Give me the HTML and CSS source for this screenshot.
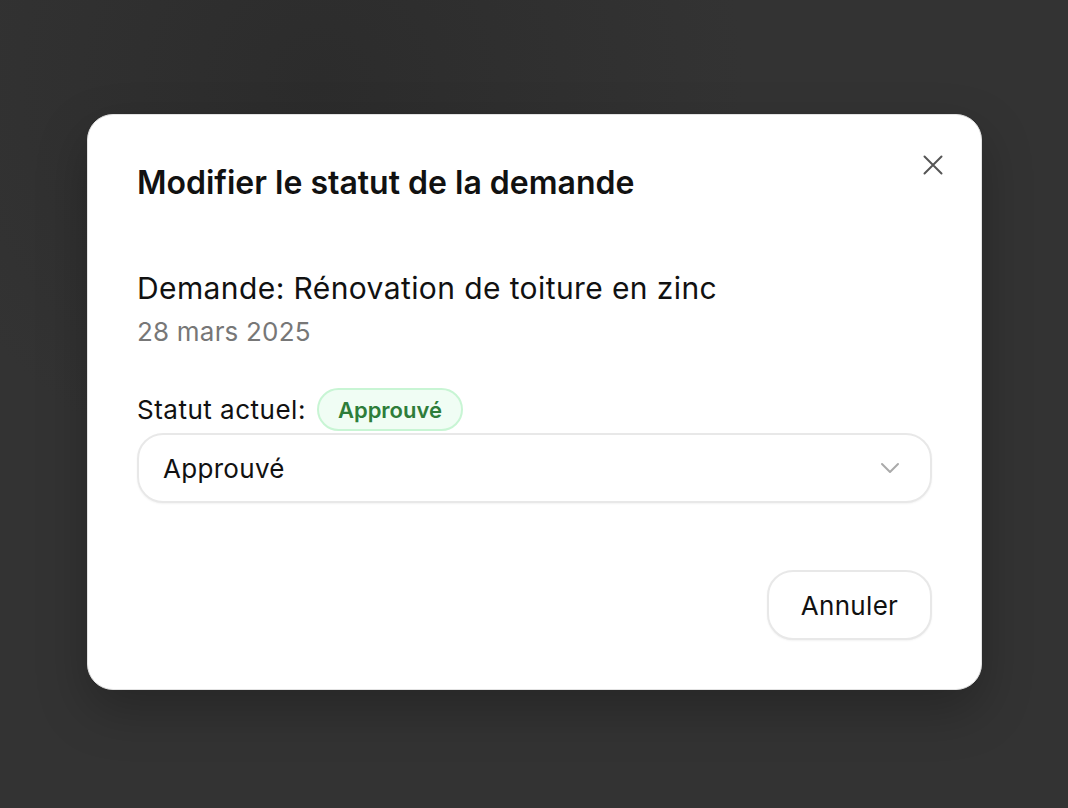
FILE: index.html
```html
<!DOCTYPE html>
<html lang="fr">
<head>
<meta charset="utf-8">
<title>Modifier le statut</title>
<link rel="stylesheet" href="styles.css">
</head>
<body>
<div class="backdrop">
  <div class="modal">
    <div class="modal-header">
      <h2 class="title">Modifier le statut de la demande</h2>
      <button class="close" aria-label="Fermer">
        <svg width="20" height="20" viewBox="0 0 20 20"><path d="M1.5 1.5 L18.5 18.5 M18.5 1.5 L1.5 18.5" stroke="#555" stroke-width="2" stroke-linecap="round" fill="none"/></svg>
      </button>
    </div>
    <div class="request">
      <div class="request-name">Demande: Rénovation de toiture en zinc</div>
      <div class="request-date">28 mars 2025</div>
    </div>
    <div class="status-row">
      <span class="status-label">Statut actuel:</span>
      <span class="badge">Approuvé</span>
    </div>
    <div class="select">
      <span>Approuvé</span>
      <svg width="20" height="12" viewBox="0 0 20 12"><path d="M2 2 L10 10 L18 2" stroke="#aaa" stroke-width="2" fill="none" stroke-linecap="round" stroke-linejoin="round"/></svg>
    </div>
    <div class="actions">
      <button class="btn">Annuler</button>
    </div>
  </div>
</div>
</body>
</html>
```

FILE: styles.css
```css
* { box-sizing: border-box; }
html, body { margin: 0; height: 100%; }
body {
  font-family: Inter, "Noto Sans", sans-serif;
  background: #333333;
}
.backdrop {
  width: 1068px;
  height: 808px;
  background: radial-gradient(ellipse at 30% 10%, #2c2c2c 0%, #333 40%), #333;
  padding-top: 114px;
  padding-left: 87px;
}
.modal {
  width: 895px;
  height: 576px;
  background: #fff;
  border: 1px solid #e2e2e2;
  border-radius: 26px;
  padding: 44px 49px 49px 49px;
  display: flex;
  flex-direction: column;
  box-shadow: 0 20px 50px rgba(0,0,0,0.25);
}
.modal-header {
  display: flex;
  justify-content: space-between;
  align-items: flex-start;
}
.title {
  margin: 0;
  margin-top: 4px;
  font-size: 32px;
  font-weight: 600;
  letter-spacing: 0;
  color: #111;
  line-height: 40px;
}
.close {
  border: none;
  background: none;
  padding: 0;
  margin-top: -4px;
  margin-right: -11px;
  width: 20px;
  height: 20px;
  cursor: pointer;
}
.request { margin-top: 67px; }
.request-name {
  font-size: 30px;
  line-height: 36px;
  letter-spacing: 0.4px;
  color: #111;
}
.request-date {
  font-size: 26px;
  line-height: 32px;
  letter-spacing: 0.2px;
  color: #777;
  margin-top: 10px;
}
.status-row {
  margin-top: 40px;
  display: flex;
  align-items: center;
  gap: 11px;
}
.status-label {
  font-size: 26px;
  letter-spacing: 0.5px;
  color: #111;
}
.badge {
  height: 43px;
  padding: 0 19px;
  display: inline-flex;
  align-items: center;
  border-radius: 22px;
  background: #f0fdf4;
  border: 2px solid #c8f5d4;
  color: #2e7d3a;
  font-size: 22px;
  font-weight: 600;
}
.select {
  margin-top: 2px;
  height: 70px;
  border: 2px solid #e8e8e8;
  border-radius: 26px;
  display: flex;
  align-items: center;
  justify-content: space-between;
  padding: 0 30px 0 24px;
  font-size: 26px;
  letter-spacing: 0.3px;
  color: #111;
  box-shadow: 0 1px 2px rgba(0,0,0,0.05);
}
.actions {
  margin-top: auto;
  display: flex;
  justify-content: flex-end;
}
.btn {
  height: 70px;
  width: 165px;
  border: 2px solid #e8e8e8;
  border-radius: 26px;
  background: #fff;
  font-family: inherit;
  font-size: 26px;
  letter-spacing: 0.3px;
  color: #111;
  box-shadow: 0 1px 2px rgba(0,0,0,0.05);
}
```
